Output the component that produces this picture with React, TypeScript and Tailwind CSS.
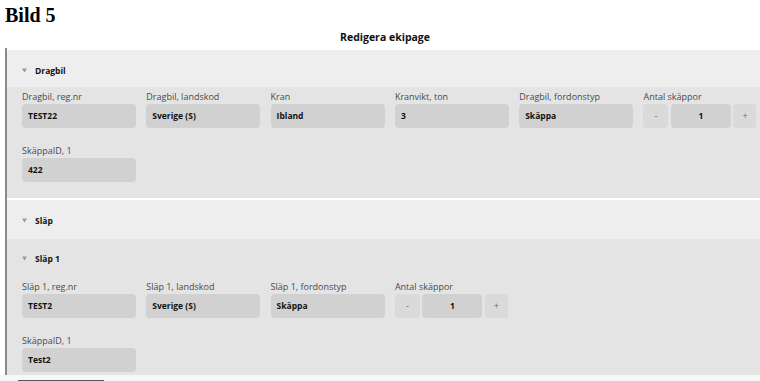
import React from "react";

const Tri = () => (
  <svg width="5" height="5" viewBox="0 0 6 5" className="mr-[8px] mt-[-2px]">
    <path d="M0 0 L6 0 L3 5 Z" fill="#999999" />
  </svg>
);

const Field = ({ label, value }: { label: string; value: string }) => (
  <div className="flex flex-col w-[114px]">
    <div className="text-[9px] leading-[12px] text-[#4a4a4a] h-[12px] mb-[1px] whitespace-nowrap">{label}</div>
    <div className="h-[24px] rounded-[4px] bg-[#d1d1d1] flex items-center px-[6px] text-[8.5px] font-bold text-[#111]">
      {value}
    </div>
  </div>
);

const Stepper = ({ label, value }: { label: string; value: string }) => (
  <div className="flex flex-col w-[115px]">
    <div className="text-[9px] leading-[12px] text-[#4a4a4a] h-[12px] mb-[1px] whitespace-nowrap">{label}</div>
    <div className="flex h-[24px] gap-[2.5px]">
      <div className="w-[25px] rounded-[3px] bg-[#dadada] flex items-center justify-center text-[9px] text-[#666]">-</div>
      <div className="w-[60px] rounded-[4px] bg-[#d1d1d1] flex items-center justify-center text-[8.5px] font-bold text-[#111]">{value}</div>
      <div className="w-[23px] rounded-[3px] bg-[#dadada] flex items-center justify-center text-[9px] text-[#666]">+</div>
    </div>
  </div>
);

export default function App() {
  return (
    <div
      className="w-[760px] h-[381px] overflow-hidden bg-white"
      style={{ fontFamily: '"Open Sans", sans-serif' }}
    >
      <div
        className="pl-[5px] pt-[3px] h-[28px] text-[20px] leading-[24px] font-bold text-black"
        style={{ fontFamily: '"Liberation Serif", serif' }}
      >
        Bild 5
      </div>
      <div className="h-[20px] flex items-start justify-center pt-[2px] text-[10.5px] leading-[14px] font-bold text-[#111] pl-[10px]">
        Redigera ekipage
      </div>
      <div className="ml-[5px] border-l-2 border-[#8a8a8a] flex flex-col w-[755px]">
        {/* Dragbil */}
        <div className="flex flex-col pt-[2px]">
          <div className="h-[37px] bg-[#eeeeee] flex items-center pt-[5px] pl-[15px] text-[8.5px] font-bold text-[#111]">
            <Tri />
            <span>Dragbil</span>
          </div>
          <div className="bg-[#e4e4e4] pl-[15px] pt-[4px] pb-[16px] flex flex-col gap-[17px]">
            <div className="grid grid-cols-[repeat(6,114px)] gap-x-[10.3px]">
              <Field label="Dragbil, reg.nr" value="TEST22" />
              <Field label="Dragbil, landskod" value="Sverige (S)" />
              <Field label="Kran" value="Ibland" />
              <Field label="Kranvikt, ton" value="3" />
              <Field label="Dragbil, fordonstyp" value="Skäppa" />
              <Stepper label="Antal skäppor" value="1" />
            </div>
            <div className="grid grid-cols-[repeat(6,114px)] gap-x-[10.3px]">
              <Field label="SkäppaID, 1" value="422" />
            </div>
          </div>
        </div>
        {/* Släp */}
        <div className="flex flex-col mt-[2px]">
          <div className="h-[39px] bg-[#eeeeee] flex items-center pt-[4px] pl-[15px] text-[8.5px] font-bold text-[#111]">
            <Tri />
            <span>Släp</span>
          </div>
          <div className="bg-[#e4e4e4] flex flex-col">
            <div className="h-[38px] flex items-center pt-[2px] pl-[15px] text-[8.5px] font-bold text-[#111]">
              <Tri />
              <span>Släp 1</span>
            </div>
            <div className="pl-[15px] pt-[4px] pb-[3px] flex flex-col gap-[17px]">
              <div className="grid grid-cols-[repeat(6,114px)] gap-x-[10.3px]">
                <Field label="Släp 1, reg.nr" value="TEST2" />
                <Field label="Släp 1, landskod" value="Sverige (S)" />
                <Field label="Släp 1, fordonstyp" value="Skäppa" />
                <Stepper label="Antal skäppor" value="1" />
              </div>
              <div className="grid grid-cols-[repeat(6,114px)] gap-x-[10.3px]">
                <Field label="SkäppaID, 1" value="Test2" />
              </div>
            </div>
          </div>
        </div>
      </div>
      <div className="bg-[#f7f7f7] h-[10px] pl-[18px] pt-[5px]">
        <div className="w-[86px] border-t border-[#555]" />
      </div>
    </div>
  );
}
